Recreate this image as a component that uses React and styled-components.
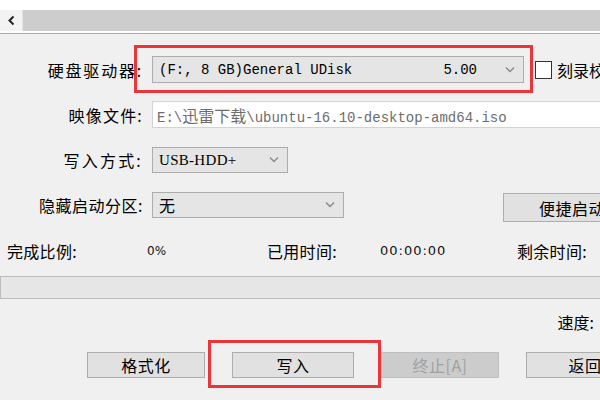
import React from 'react';
import styled, { createGlobalStyle } from 'styled-components';

const GlobalStyle = createGlobalStyle`
  html, body {
    margin: 0;
    padding: 0;
    background: #f0f0f0;
  }
  body {
    font-family: "Noto Sans CJK SC", "Noto Sans", sans-serif;
    color: #000;
  }
`;

const Window = styled.div`
  width: 600px;
  height: 400px;
  overflow: hidden;
  background: #f0f0f0;
  display: flex;
  flex-direction: column;
`;

const TopStrip = styled.div`
  height: 10px;
  background: #ffffff;
  flex: none;
`;

const ScrollBar = styled.div`
  height: 21px;
  display: flex;
  flex: none;
  background: #f3f3f3;
`;

const ScrollArrow = styled.div`
  width: 22px;
  display: flex;
  align-items: center;
  justify-content: center;
  color: #333;
`;

const ScrollTrack = styled.div`
  flex: 1;
  background: #cdcdcd;
  border-left: 1px solid #e4e4e4;
`;

const Divider = styled.div`
  height: 2px;
  background: #ffffff;
  border-bottom: 1px solid #a9a9a9;
  flex: none;
`;

const Form = styled.div`
  display: flex;
  flex-direction: column;
  padding-top: 22px;
`;

const Row = styled.div`
  display: flex;
  align-items: ${p => p.$align || 'center'};
  margin-top: ${p => p.$gap || 0}px;
  white-space: nowrap;
`;

const Label = styled.div`
  width: 143px;
  flex: none;
  text-align: right;
  font-size: 16px;
  letter-spacing: ${p => p.$spread ?? 1}px;
  line-height: 26px;
  padding-right: 9px;
  box-sizing: content-box;
`;

const Select = styled.div`
  position: relative;
  width: ${p => p.$w}px;
  height: ${p => p.$h || 26}px;
  box-sizing: border-box;
  flex: none;
  background: #e5e5e5;
  border: 1px solid #adadad;
  display: flex;
  align-items: center;
  padding-left: 6px;
  padding-right: 34px;
`;

const Chevron = styled.svg`
  position: absolute;
  right: 8px;
  top: 50%;
  margin-top: -4px;
`;

const MonoText = styled.span`
  font-family: "Liberation Mono", "Noto Sans CJK SC", monospace;
  font-size: 14px;
  color: ${p => p.$color || '#000'};
`;

const Cjk = styled.span`
  font-family: "Noto Sans CJK SC", sans-serif;
  font-size: 16px;
`;

const Capacity = styled(MonoText)`
  margin-left: auto;
  padding-right: 12px;
`;

const ModeText = styled.span`
  font-family: "Liberation Serif", serif;
  font-size: 15px;
  letter-spacing: 0.3px;
`;

const PlainText = styled.span`
  font-size: 16px;
`;

const Highlight = styled.div`
  position: relative;
  flex: none;
  &::after {
    content: '';
    position: absolute;
    left: ${p => p.$l}px;
    right: ${p => p.$r}px;
    top: ${p => p.$t}px;
    bottom: ${p => p.$b}px;
    border: 3px solid #ea3539;
    pointer-events: none;
  }
`;

const CheckBox = styled.div`
  width: 17px;
  height: 18px;
  box-sizing: border-box;
  background: #fff;
  border: 1px solid #333;
  margin-left: 11px;
  flex: none;
`;

const CheckLabel = styled.span`
  font-size: 16px;
  margin-left: 5px;
`;

const TextField = styled.div`
  width: 460px;
  height: 27px;
  box-sizing: border-box;
  flex: none;
  background: #fff;
  border: 1px solid #d3d3d3;
  display: flex;
  align-items: center;
  padding-left: 4px;
`;

const Spacer = styled.div`
  flex: none;
  width: ${p => p.$w}px;
`;

const Button = styled.div`
  width: ${p => p.$w || 118}px;
  height: ${p => p.$h || 26}px;
  margin-top: ${p => p.$mt || 0}px;
  flex: none;
  box-sizing: border-box;
  background: ${p => (p.$disabled ? '#cccccc' : '#e1e1e1')};
  border: 1px solid ${p => (p.$disabled ? '#bfbfbf' : '#adadad')};
  color: ${p => (p.$disabled ? '#a0a0a0' : '#000')};
  display: flex;
  align-items: center;
  justify-content: center;
  font-size: 16px;
  letter-spacing: 0.5px;
`;

const Stats = styled.div`
  display: grid;
  grid-template-columns: 140px 120px 113px 137px 1fr;
  padding-left: 7px;
  margin-top: 18px;
  height: 22px;
  line-height: 22px;
  white-space: nowrap;
`;

const StatLabel = styled.span`
  font-size: 16px;
  letter-spacing: 0.3px;
`;

const StatValue = styled.span`
  font-family: "DejaVu Sans", sans-serif;
  font-size: ${p => p.$size || 13}px;
  letter-spacing: ${p => p.$spread || 0}px;
  color: #111;
`;

const Progress = styled.div`
  margin-top: 14px;
  height: 23px;
  box-sizing: border-box;
  background: #e6e6e6;
  border-top: 1px solid #bcbcbc;
  border-bottom: 1px solid #bcbcbc;
  border-left: 1px solid #bcbcbc;
`;

const SpeedRow = styled.div`
  margin-top: 12px;
  height: 22px;
  line-height: 22px;
  display: flex;
  justify-content: flex-end;
  padding-right: 6px;
  font-size: 16px;
`;

const ButtonBar = styled.div`
  margin-top: 19px;
  display: flex;
  gap: 27px;
  padding-left: 87px;
  white-space: nowrap;
`;

function ChevronIcon() {
  return (
    <Chevron width="10" height="7" viewBox="0 0 10 7">
      <path d="M1 1.5 L5 5.5 L9 1.5" fill="none" stroke="#8a8a8a" strokeWidth="1.4" />
    </Chevron>
  );
}

export default function App() {
  return (
    <Window>
      <GlobalStyle />
      <TopStrip />
      <ScrollBar>
        <ScrollArrow>
          <svg width="9" height="11" viewBox="0 0 9 11">
            <path d="M6.5 1.5 L2.5 5.5 L6.5 9.5" fill="none" stroke="#222" strokeWidth="2" />
          </svg>
        </ScrollArrow>
        <ScrollTrack />
      </ScrollBar>
      <Divider />

      <Form>
        <Row>
          <Label $spread={1.8}>硬盘驱动器:</Label>
          <Highlight $l={-18} $r={-9} $t={-11} $b={-10}>
            <Select $w={372} $h={27}>
              <MonoText>(F:, 8 GB)General UDisk</MonoText>
              <Capacity>5.00</Capacity>
              <ChevronIcon />
            </Select>
          </Highlight>
          <CheckBox />
          <CheckLabel>刻录校验</CheckLabel>
        </Row>

        <Row $gap={18}>
          <Label $spread={1.2}>映像文件:</Label>
          <TextField>
            <MonoText $color="#6d6d6d">
              E:\<Cjk>迅雷下载</Cjk>\ubuntu-16.10-desktop-amd64.iso
            </MonoText>
          </TextField>
        </Row>

        <Row $gap={19}>
          <Label $spread={2.2}>写入方式:</Label>
          <Select $w={136}>
            <ModeText>USB-HDD+</ModeText>
            <ChevronIcon />
          </Select>
        </Row>

        <Row $gap={19} $align="flex-start">
          <Label $spread={0.5}>隐藏启动分区:</Label>
          <Select $w={192}>
            <PlainText>无</PlainText>
            <ChevronIcon />
          </Select>
          <Spacer $w={159} />
          <Button $w={138} $h={29} $mt={1}>便捷启动</Button>
        </Row>
      </Form>

      <Stats>
        <StatLabel>完成比例:</StatLabel>
        <StatValue $size={12}>0%</StatValue>
        <StatLabel>已用时间:</StatLabel>
        <StatValue $spread={1}>00:00:00</StatValue>
        <StatLabel>剩余时间:</StatLabel>
      </Stats>

      <Progress />

      <SpeedRow>速度:</SpeedRow>

      <ButtonBar>
        <Button>格式化</Button>
        <Highlight $l={-24} $r={-27} $t={-12} $b={-10}>
          <Button $w={122}>写入</Button>
        </Highlight>
        <Button $disabled>终止[A]</Button>
        <Button>返回</Button>
      </ButtonBar>
    </Window>
  );
}
